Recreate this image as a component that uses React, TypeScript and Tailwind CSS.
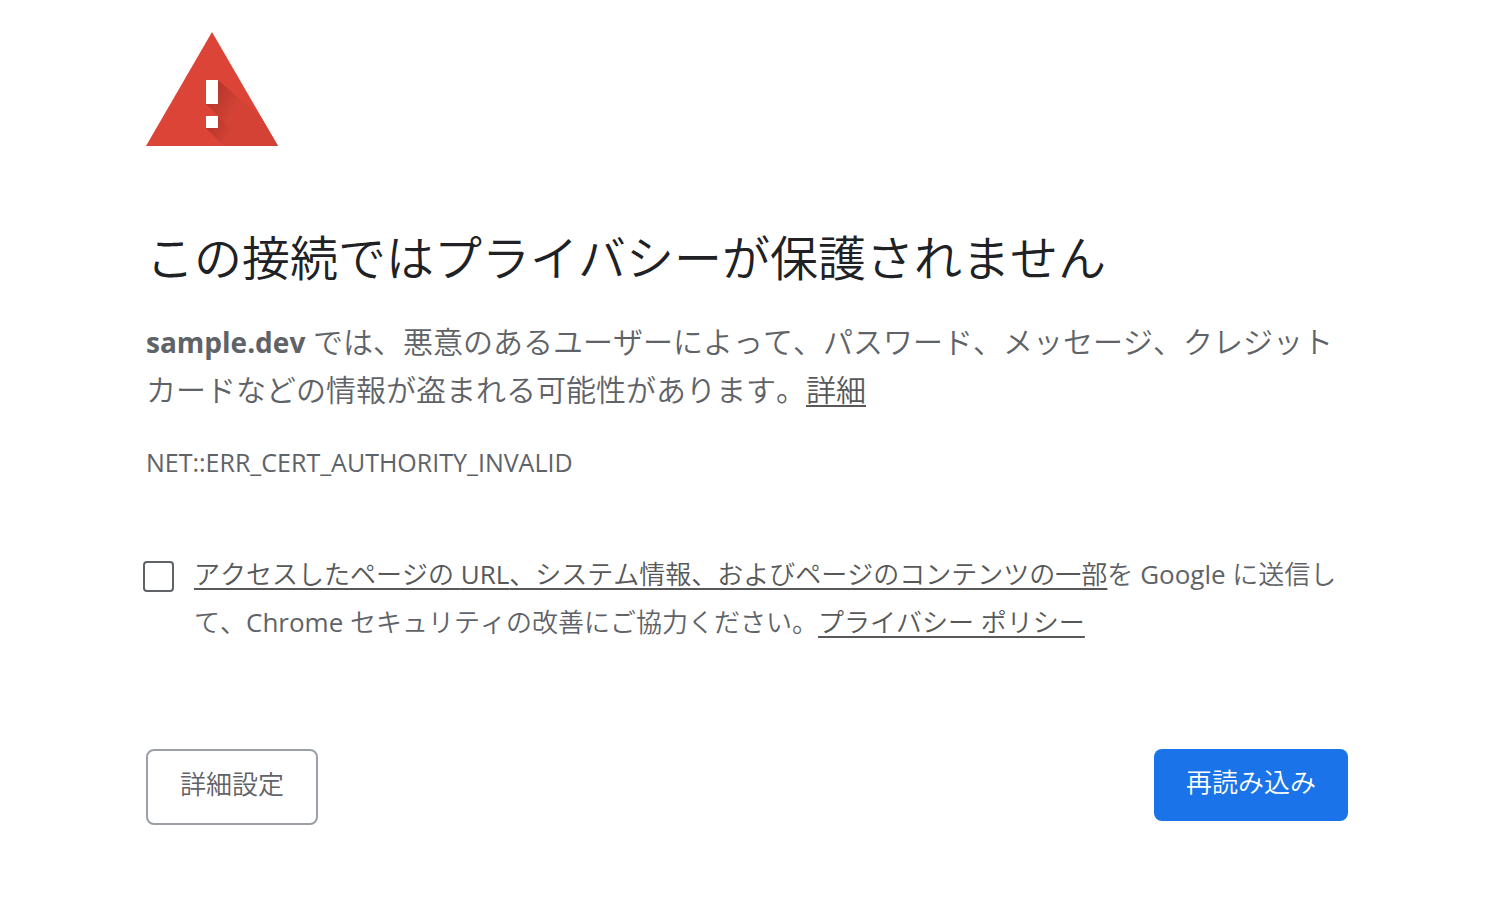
const links = "text-[#585858] underline decoration-2 underline-offset-4";
const buttons = "rounded-lg px-8 text-[26px] leading-[48px] font-[350] pt-[9px] pb-[15px]";

function WarningIcon() {
  return (
    <svg className="block h-[114px] w-[132px]" viewBox="0 0 132 114" aria-hidden="true">
      <defs>
        <linearGradient id="upper" gradientUnits="userSpaceOnUse" x1="62" y1="70" x2="84" y2="84">
          <stop offset="0" stopColor="#b7372c" />
          <stop offset="1" stopColor="#d34235" />
        </linearGradient>
        <linearGradient id="lower" gradientUnits="userSpaceOnUse" x1="64" y1="94" x2="82" y2="104">
          <stop offset="0" stopColor="#b7372c" />
          <stop offset="1" stopColor="#d34235" />
        </linearGradient>
      </defs>
      <path d="M66 0L132 114H0z" fill="#db4437" />
      <path d="M72 48L115 85L132 114H102L60 72z" fill="url(#upper)" />
      <path d="M72 84L102 114H78L60 96z" fill="url(#lower)" />
      <path d="M60 48h12v24H60zM60 84h12v12H60z" fill="#fff" />
    </svg>
  );
}

export default function App() {
  return (
    <div className="min-h-screen bg-white pr-4 font-['Open_Sans','Noto_Sans_CJK_JP',sans-serif] text-[#5f6368] [font-kerning:none]">
      <main className="mx-auto max-w-[1202px] pt-8">
        <WarningIcon />
        <h1 className="mt-20 text-5xl leading-[64px] font-[350] text-[#202124]">
          この接続ではプライバシーが保護されません
        </h1>
        <p className="mt-7 text-[30px] leading-[48px] font-[350]">
          <strong className="text-[28px] font-bold">sample.dev</strong>{" "}
          では、悪意のあるユーザーによって、パスワード、メッセージ、クレジット カードなどの情報が盗まれる可能性があります。
          <a href="#" className={links}>詳細</a>
        </p>
        <p className="mt-6 text-[25px] leading-[48px]">NET::ERR_CERT_AUTHORITY_INVALID</p>
        <div className="mt-16 flex gap-5">
          <input
            id="report"
            type="checkbox"
            className="mt-[11px] -ml-[3px] size-[31px] shrink-0 appearance-none rounded border-2 border-[#5f6368] bg-white"
          />
          <label htmlFor="report" className="text-[26px] leading-[48px] font-[350]">
            <a href="#" className={links}>
              アクセスしたページの <span className="font-normal">URL</span>、システム情報、およびページのコンテンツの一部
            </a>
            を <span className="font-normal">Google</span> に送信して、<span className="font-normal">Chrome</span>{" "}
            セキュリティの改善にご協力ください。
            <a href="#" className={links}>プライバシー ポリシー</a>
          </label>
        </div>
        <div className="mt-[103px] flex items-start justify-between">
          <button className={`${buttons} border-2 border-[#9aa0a6]`}>詳細設定</button>
          <button className={`${buttons} bg-[#1a73e8] text-white`}>再読み込み</button>
        </div>
      </main>
    </div>
  );
}
